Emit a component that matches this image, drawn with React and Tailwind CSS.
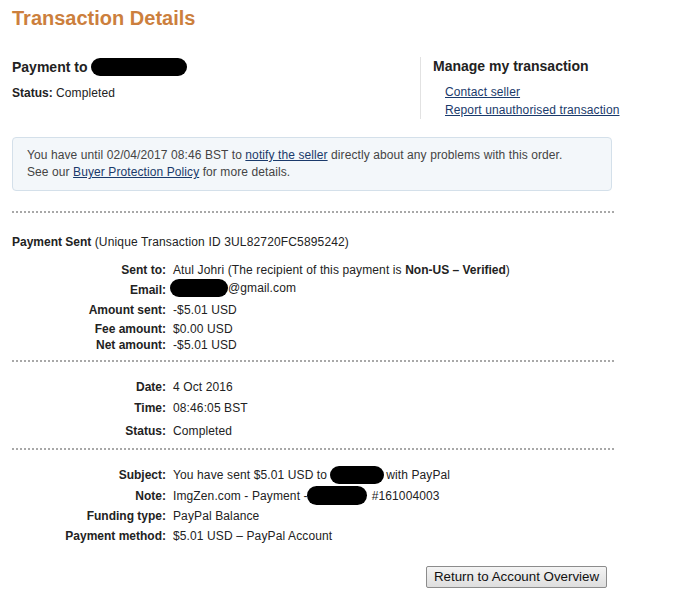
import React from 'react';

const Redact = ({ w, h = 18 }) => (
    <span className={`inline-block align-middle bg-black rounded-full ${w} ${h === 18 ? 'h-[18px]' : 'h-[19px]'}`}></span>
);

const Row = ({ label, children, h }) => (
    <div className={`flex items-center ${h}`}>
        <div className="w-[161px] shrink-0 text-right font-bold pr-[7px]">{label}</div>
        <div className="tracking-[0.12px] whitespace-nowrap">{children}</div>
    </div>
);

const Dots = () => <div className="border-t-2 border-dotted border-[#a8a8a8] w-[602px]"></div>;

const App = () => {
    return (
        <div className="w-[682px] h-[601px] bg-white text-[12px] text-[#222] px-3 leading-[16px]" style={{ fontFamily: '"Liberation Sans", Arial, sans-serif' }}>
            <h1 className="text-[20px] font-bold text-[#cc7f3d] pt-[6px] leading-[24px]">Transaction Details</h1>

            <div className="flex mt-[27px] w-[602px]">
                <div className="w-[408px] shrink-0 pt-[1px]">
                    <div className="flex items-center gap-1 text-[14px] font-bold h-[18px]">
                        <span>Payment to</span>
                        <Redact w="w-[96px]" />
                    </div>
                    <div className="mt-[9px]"><b>Status:</b> <span className="tracking-[0.12px]">Completed</span></div>
                </div>
                <div className="border-l border-[#e2e2e2] pl-3 h-[62px] whitespace-nowrap">
                    <div className="text-[14px] font-bold h-[18px] mt-[1px]">Manage my transaction</div>
                    <div className="pl-3 mt-[7px] flex flex-col items-start leading-[18px] tracking-[0.12px]">
                        <a href="#" className="underline text-[#1a3a6b]">Contact seller</a>
                        <a href="#" className="underline text-[#1a3a6b]">Report unauthorised transaction</a>
                    </div>
                </div>
            </div>

            <div className="mt-[18px] w-[600px] h-[54px] bg-[#f3f7fa] border border-[#d4e0ea] rounded-[4px] pl-[14px] pt-[9px] text-[#444] leading-[17px] tracking-[0.09px]">
                <div>You have until 02/04/2017 08:46 BST to <a href="#" className="underline text-[#1a3a6b]">notify the seller</a> directly about any problems with this order.</div>
                <div>See our <a href="#" className="underline text-[#1a3a6b]">Buyer Protection Policy</a> for more details.</div>
            </div>

            <div className="mt-[20px]"><Dots /></div>

            <div className="mt-[21px]"><b>Payment Sent</b> <span className="tracking-[0.15px]">(Unique Transaction ID 3UL82720FC5895242)</span></div>

            <div className="mt-[10px]">
                <Row label="Sent to:" h="h-[20px]">Atul Johri (The recipient of this payment is <b className="tracking-normal">Non-US – Verified</b>)</Row>
                <Row label="Email:" h="h-[20px]"><span className="inline-flex items-center -ml-[3px]"><Redact w="w-[58px]" />@gmail.com</span></Row>
                <Row label="Amount sent:" h="h-[20px]">-$5.01 USD</Row>
                <Row label="Fee amount:" h="h-[17px]">$0.00 USD</Row>
                <Row label="Net amount:" h="h-[16px]">-$5.01 USD</Row>
            </div>

            <div className="mt-[7px]"><Dots /></div>

            <div className="mt-[14px]">
                <Row label="Date:" h="h-[21px]">4 Oct 2016</Row>
                <Row label="Time:" h="h-[21px]">08:46:05 BST</Row>
                <Row label="Status:" h="h-[26px]">Completed</Row>
            </div>

            <div className="mt-[4px]"><Dots /></div>

            <div className="mt-[15px]">
                <Row label="Subject:" h="h-[20px]"><span className="inline-flex items-center">You have sent $5.01 USD to<span className="ml-[3px] mr-[2px] inline-flex"><Redact w="w-[54px]" /></span>with PayPal</span></Row>
                <Row label="Note:" h="h-[21px]"><span className="inline-flex items-center">ImgZen.com - Payment -<span className="-ml-[1px] mr-[5px] inline-flex"><Redact w="w-[60px]" h={19} /></span>#161004003</span></Row>
                <Row label="Funding type:" h="h-[20px]">PayPal Balance</Row>
                <Row label="Payment method:" h="h-[20px]">$5.01 USD – PayPal Account</Row>
            </div>

            <div className="flex w-[595px] justify-end mt-[20px]">
                <button className="h-[22px] w-[181px] border border-[#8c8c8c] bg-gradient-to-b from-[#f4f4f4] to-[#dedede] text-[13.33px] text-[#111] rounded-[2px]" style={{ fontFamily: '"Liberation Sans", Arial, sans-serif' }}>
                    Return to Account Overview
                </button>
            </div>
        </div>
    );
};

export default App;
